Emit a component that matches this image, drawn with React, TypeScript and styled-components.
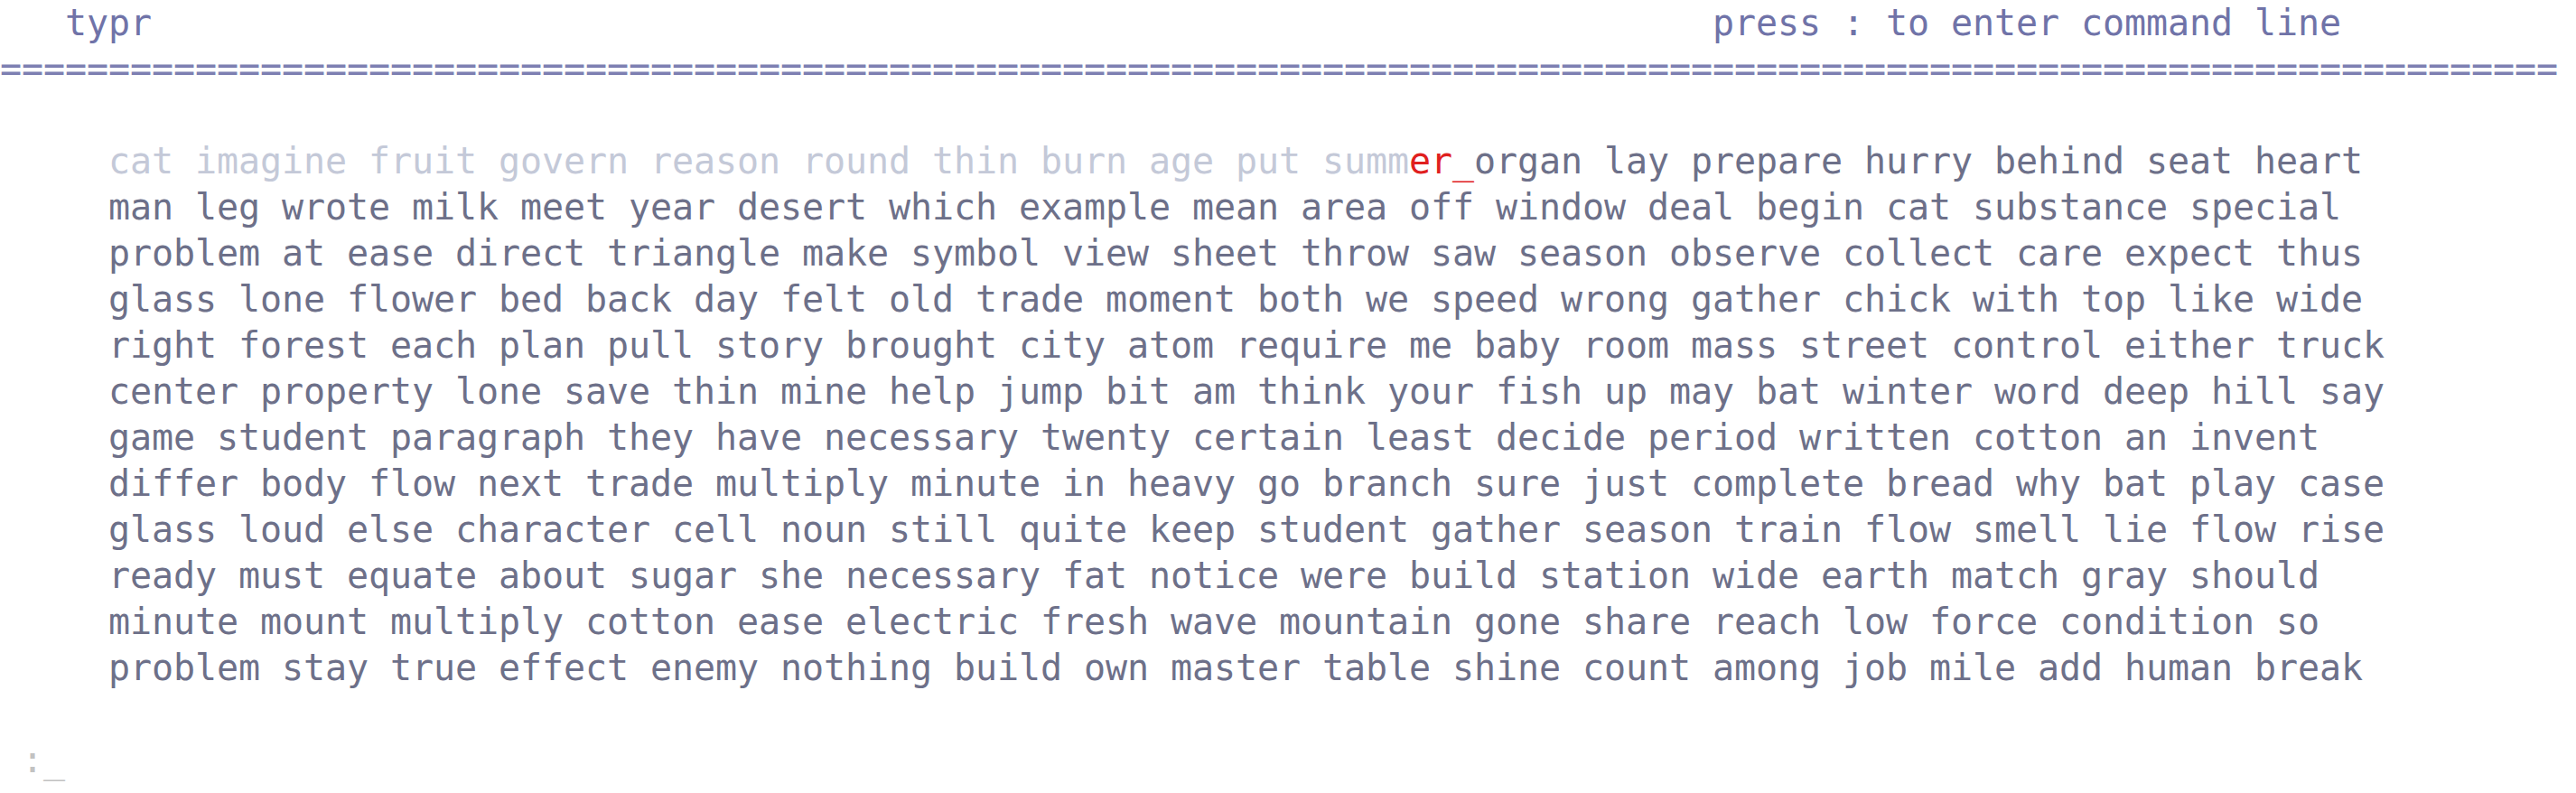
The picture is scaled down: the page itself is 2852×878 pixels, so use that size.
import React from "react";
import styled, { createGlobalStyle } from "styled-components";

const GlobalStyle = createGlobalStyle`
  html, body {
    margin: 0;
    padding: 0;
    background: #ffffff;
  }
`;

const COLS = 118;
const CELL_W = 24;
const ROW_H = 51;

const Screen = styled.div`
  width: ${COLS * CELL_W}px;
  height: 878px;
  display: flex;
  flex-direction: column;
  font-family: "DejaVu Sans Mono", "Liberation Mono", monospace;
  font-size: 40px;
  letter-spacing: -0.082px;
  line-height: ${ROW_H}px;
  white-space: pre;
  color: #6d7089;
  overflow: hidden;
`;

const Row = styled.div<{ $indent?: number }>`
  height: ${ROW_H}px;
  flex: none;
  padding-left: ${(p) => (p.$indent ?? 0) * CELL_W}px;
`;

const HeaderBar = styled(Row)`
  display: flex;
  justify-content: space-between;
  padding-right: ${10 * CELL_W}px;
  color: #7073a8;
`;

const Rule = styled(Row)`
  color: #7d7fb2;
`;

const Passage = styled.div`
  display: flex;
  flex-direction: column;
`;

const Typed = styled.span`
  color: #c4c9d8;
`;

const Wrong = styled.span`
  color: #e0201e;
`;

const Cursor = styled.span`
  color: #e0201e;
`;

const Pending = styled.span`
  color: #6d7089;
`;

const CommandLine = styled(Row)`
  color: #c2c2c2;
  margin-top: auto;
  margin-bottom: 11px;
`;

const lines = [
  "man leg wrote milk meet year desert which example mean area off window deal begin cat substance special",
  "problem at ease direct triangle make symbol view sheet throw saw season observe collect care expect thus",
  "glass lone flower bed back day felt old trade moment both we speed wrong gather chick with top like wide",
  "right forest each plan pull story brought city atom require me baby room mass street control either truck",
  "center property lone save thin mine help jump bit am think your fish up may bat winter word deep hill say",
  "game student paragraph they have necessary twenty certain least decide period written cotton an invent",
  "differ body flow next trade multiply minute in heavy go branch sure just complete bread why bat play case",
  "glass loud else character cell noun still quite keep student gather season train flow smell lie flow rise",
  "ready must equate about sugar she necessary fat notice were build station wide earth match gray should",
  "minute mount multiply cotton ease electric fresh wave mountain gone share reach low force condition so",
  "problem stay true effect enemy nothing build own master table shine count among job mile add human break",
];

export default function App() {
  return (
    <>
      <GlobalStyle />
      <Screen>
        <HeaderBar $indent={3}>
          <span>typr</span>
          <span>press : to enter command line</span>
        </HeaderBar>
        <Rule>{"=".repeat(COLS)}</Rule>
        <Row />
        <Passage>
          <Row $indent={5}>
            <Typed>cat imagine fruit govern reason round thin burn age put summ</Typed>
            <Wrong>er</Wrong>
            <Cursor>_</Cursor>
            <Pending>organ lay prepare hurry behind seat heart</Pending>
          </Row>
          {lines.map((l, i) => (
            <Row key={i} $indent={5}>
              {l}
            </Row>
          ))}
        </Passage>
        <CommandLine $indent={1}>:_</CommandLine>
      </Screen>
    </>
  );
}
